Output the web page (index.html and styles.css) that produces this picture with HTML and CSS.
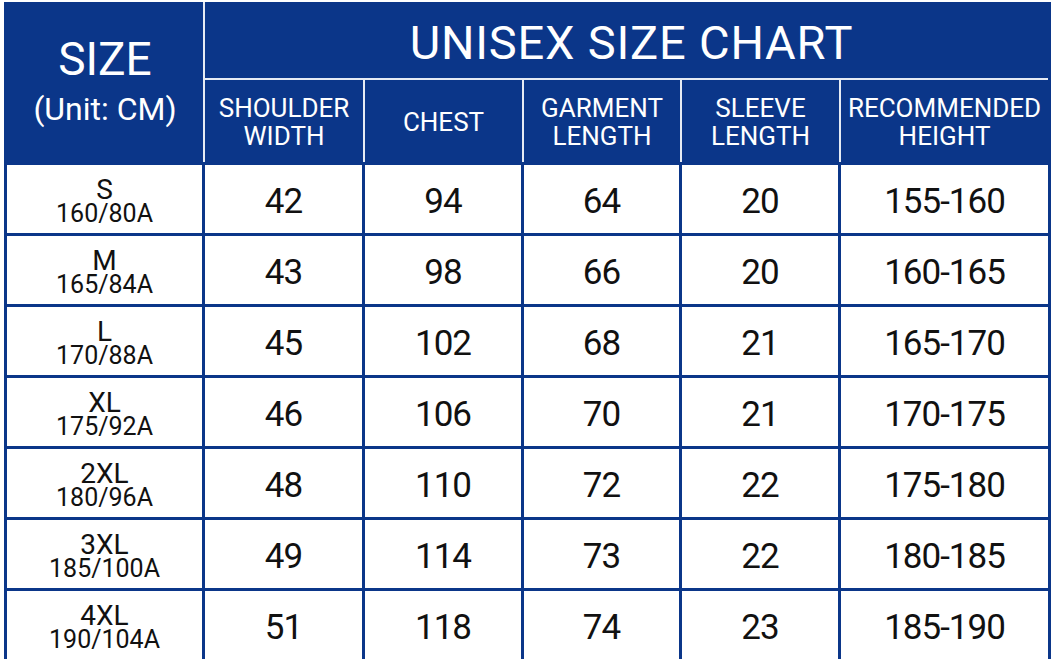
FILE: index.html
```html
<!DOCTYPE html>
<html lang="en">
<head>
<meta charset="utf-8">
<title>Unisex Size Chart</title>
<link rel="stylesheet" href="styles.css">
</head>
<body>
<div class="chart">
  <div class="h-size">
    <span class="size-big">SIZE</span>
    <span class="size-unit">(Unit: CM)</span>
  </div>
  <div class="h-title">UNISEX SIZE CHART</div>
  <div class="h-sub">SHOULDER<br>WIDTH</div>
  <div class="h-sub">CHEST</div>
  <div class="h-sub">GARMENT<br>LENGTH</div>
  <div class="h-sub">SLEEVE<br>LENGTH</div>
  <div class="h-sub last">RECOMMENDED<br>HEIGHT</div>

  <div class="c-size"><span class="sz">S</span><span class="code">160/80A</span></div>
  <div class="c">42</div><div class="c">94</div><div class="c">64</div><div class="c">20</div><div class="c last">155-160</div>

  <div class="c-size"><span class="sz">M</span><span class="code">165/84A</span></div>
  <div class="c">43</div><div class="c">98</div><div class="c">66</div><div class="c">20</div><div class="c last">160-165</div>

  <div class="c-size"><span class="sz">L</span><span class="code">170/88A</span></div>
  <div class="c">45</div><div class="c">102</div><div class="c">68</div><div class="c">21</div><div class="c last">165-170</div>

  <div class="c-size"><span class="sz">XL</span><span class="code">175/92A</span></div>
  <div class="c">46</div><div class="c">106</div><div class="c">70</div><div class="c">21</div><div class="c last">170-175</div>

  <div class="c-size"><span class="sz">2XL</span><span class="code">180/96A</span></div>
  <div class="c">48</div><div class="c">110</div><div class="c">72</div><div class="c">22</div><div class="c last">175-180</div>

  <div class="c-size"><span class="sz">3XL</span><span class="code">185/100A</span></div>
  <div class="c">49</div><div class="c">114</div><div class="c">73</div><div class="c">22</div><div class="c last">180-185</div>

  <div class="c-size"><span class="sz">4XL</span><span class="code">190/104A</span></div>
  <div class="c">51</div><div class="c">118</div><div class="c">74</div><div class="c">23</div><div class="c last">185-190</div>
</div>
</body>
</html>
```
FILE: styles.css
```css
html, body {
  margin: 0;
  padding: 0;
  background: #ffffff;
}
body {
  padding: 2px 0 0 4px;
  font-family: Roboto, "Liberation Sans", sans-serif;
  overflow: hidden;
}
.chart {
  width: 1047px;
  box-sizing: border-box;
  border-left: 3px solid #0b3689;
  border-right: 3px solid #0b3689;
  display: grid;
  grid-template-columns: 198px 160px 159px 158px 159px 1fr;
  grid-template-rows: 78px 82px repeat(7, 71px);
}
.h-size {
  grid-row: 1 / 3;
  grid-column: 1;
  background: #0b3689;
  color: #fff;
  border-right: 2px solid #e6ebf4;
  display: flex;
  flex-direction: column;
  align-items: center;
  justify-content: center;
}
.size-big {
  font-size: 46px;
  line-height: 48px;
  margin-bottom: 6px;
}
.size-unit {
  font-size: 32px;
  line-height: 40px;
}
.h-title {
  grid-row: 1;
  grid-column: 2 / 7;
  background: #0b3689;
  color: #fff;
  border-bottom: 2px solid #e6ebf4;
  font-size: 47px;
  letter-spacing: 0.8px;
  display: flex;
  align-items: center;
  justify-content: center;
  padding-left: 10px;
  padding-top: 4px;
}
.h-sub {
  background: #0b3689;
  color: #fff;
  border-right: 2px solid #e6ebf4;
  font-size: 26px;
  line-height: 28px;
  display: flex;
  align-items: center;
  justify-content: center;
  text-align: center;
  padding-top: 2px;
}
.h-sub.last {
  border-right: none;
}
.c, .c-size {
  border-top: 3px solid #0b3689;
  border-right: 3px solid #0b3689;
  color: #111;
  display: flex;
  align-items: center;
  justify-content: center;
}
.c.last {
  border-right: none;
}
.c {
  font-size: 35px;
  letter-spacing: -1px;
  padding-top: 4px;
}
.c-size {
  flex-direction: column;
  padding-top: 4px;
}
.sz {
  font-size: 28px;
  line-height: 25px;
}
.code {
  font-size: 25px;
  line-height: 24px;
}
```
